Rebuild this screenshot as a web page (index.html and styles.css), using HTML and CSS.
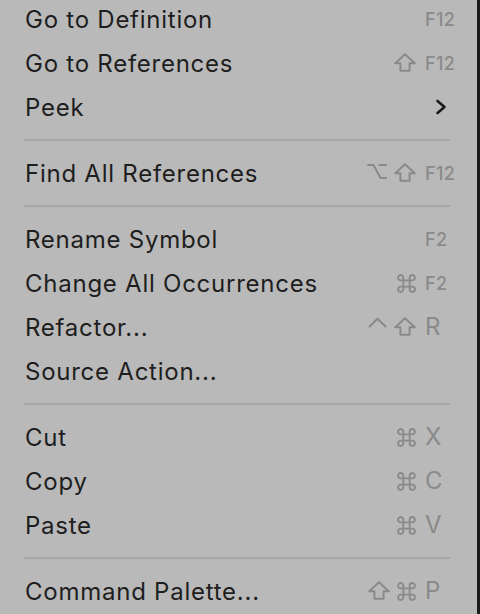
FILE: index.html
```html
<!DOCTYPE html>
<html lang="en">
<head>
<meta charset="utf-8">
<title>Context Menu</title>
<link rel="stylesheet" href="styles.css">
</head>
<body>
<div class="menu">
  <div class="item"><span class="label">Go to Definition</span><span class="keys"><span class="key fkey">F12</span></span></div>
  <div class="item"><span class="label">Go to References</span><span class="keys">
    <svg class="mod shift" viewBox="0 0 22 19"><path d="M11 1.2 L20.8 10.2 H15.6 V17.8 H6.4 V10.2 H1.2 Z"/></svg>
    <span class="key fkey">F12</span></span></div>
  <div class="item"><span class="label">Peek</span>
    <svg class="chev" viewBox="0 0 12 16"><path d="M2.5 2 L9.5 8 L2.5 14"/></svg></div>
  <div class="sep"></div>
  <div class="item"><span class="label">Find All References</span><span class="keys">
    <svg class="mod opt" viewBox="0 0 20 17"><path d="M1 2 H6.5 L13.5 15 H19.5 M12.5 2 H19.5"/></svg>
    <svg class="mod shift" viewBox="0 0 22 19"><path d="M11 1.2 L20.8 10.2 H15.6 V17.8 H6.4 V10.2 H1.2 Z"/></svg>
    <span class="key fkey">F12</span></span></div>
  <div class="sep"></div>
  <div class="item"><span class="label">Rename Symbol</span><span class="keys"><span class="key fkey">F2</span></span></div>
  <div class="item"><span class="label">Change All Occurrences</span><span class="keys">
    <svg class="mod cmd" viewBox="0.5 0.5 18 18"><path d="M6.5 6.5 V4 A2.5 2.5 0 1 0 4 6.5 H15 A2.5 2.5 0 1 0 12.5 4 V15 A2.5 2.5 0 1 0 15 12.5 H4 A2.5 2.5 0 1 0 6.5 15 Z"/></svg>
    <span class="key fkey">F2</span></span></div>
  <div class="item"><span class="label">Refactor...</span><span class="keys">
    <svg class="mod ctrl" viewBox="0 0 19 11"><path d="M1.5 9.5 L9.5 1.8 L17.5 9.5"/></svg>
    <svg class="mod shift" viewBox="0 0 22 19"><path d="M11 1.2 L20.8 10.2 H15.6 V17.8 H6.4 V10.2 H1.2 Z"/></svg>
    <span class="key">R</span></span></div>
  <div class="item"><span class="label">Source Action...</span></div>
  <div class="sep"></div>
  <div class="item"><span class="label">Cut</span><span class="keys">
    <svg class="mod cmd" viewBox="0.5 0.5 18 18"><path d="M6.5 6.5 V4 A2.5 2.5 0 1 0 4 6.5 H15 A2.5 2.5 0 1 0 12.5 4 V15 A2.5 2.5 0 1 0 15 12.5 H4 A2.5 2.5 0 1 0 6.5 15 Z"/></svg>
    <span class="key">X</span></span></div>
  <div class="item"><span class="label">Copy</span><span class="keys">
    <svg class="mod cmd" viewBox="0.5 0.5 18 18"><path d="M6.5 6.5 V4 A2.5 2.5 0 1 0 4 6.5 H15 A2.5 2.5 0 1 0 12.5 4 V15 A2.5 2.5 0 1 0 15 12.5 H4 A2.5 2.5 0 1 0 6.5 15 Z"/></svg>
    <span class="key">C</span></span></div>
  <div class="item"><span class="label">Paste</span><span class="keys">
    <svg class="mod cmd" viewBox="0.5 0.5 18 18"><path d="M6.5 6.5 V4 A2.5 2.5 0 1 0 4 6.5 H15 A2.5 2.5 0 1 0 12.5 4 V15 A2.5 2.5 0 1 0 15 12.5 H4 A2.5 2.5 0 1 0 6.5 15 Z"/></svg>
    <span class="key">V</span></span></div>
  <div class="sep"></div>
  <div class="item"><span class="label">Command Palette...</span><span class="keys">
    <svg class="mod shift" viewBox="0 0 22 19"><path d="M11 1.2 L20.8 10.2 H15.6 V17.8 H6.4 V10.2 H1.2 Z"/></svg>
    <svg class="mod cmd" viewBox="0.5 0.5 18 18"><path d="M6.5 6.5 V4 A2.5 2.5 0 1 0 4 6.5 H15 A2.5 2.5 0 1 0 12.5 4 V15 A2.5 2.5 0 1 0 15 12.5 H4 A2.5 2.5 0 1 0 6.5 15 Z"/></svg>
    <span class="key">P</span></span></div>
</div>
</body>
</html>
```
FILE: styles.css
```css
html, body {
  margin: 0;
  padding: 0;
  background: #1b1b1b;
  height: 614px;
  overflow: hidden;
}
.menu {
  width: 477px;
  height: 617px;
  margin-top: -3px;
  background: #b9b9b9;
  font-family: Inter, "Noto Sans", sans-serif;
  display: flex;
  flex-direction: column;
}
.item {
  height: 44px;
  display: flex;
  align-items: center;
  padding: 0 22px 0 25px;
}
.label {
  flex: 1;
  font-size: 24px;
  color: #1e1e1e;
  letter-spacing: 0.75px;
}
.keys {
  display: flex;
  align-items: center;
  gap: 7px;
}
.key {
  width: 30px;
  margin-left: 2px;
  font-size: 24px;
  line-height: 1;
  color: #8a8a8a;
}
.key.fkey {
  font-size: 18px;
  font-weight: 500;
  letter-spacing: 0.3px;
  padding-top: 2px;
}
.mod {
  fill: none;
  stroke: #8a8a8a;
  stroke-width: 2;
  stroke-linejoin: round;
  stroke-linecap: round;
}
.shift { width: 22px; height: 19px; margin-top: -1px; }
.opt { width: 20px; height: 17px; margin-top: -3px; }
.cmd { width: 19px; height: 19px; stroke-width: 1.8; }
.ctrl { width: 19px; height: 11px; margin-top: -9px; }
.chev {
  width: 12px;
  height: 16px;
  margin-right: 8px;
  fill: none;
  stroke: #1a1a1a;
  stroke-width: 2.6;
  stroke-linecap: round;
  stroke-linejoin: round;
}
.sep {
  height: 22px;
  display: flex;
  align-items: center;
  padding: 0 27px 0 24px;
}
.sep::before {
  content: "";
  flex: 1;
  height: 2px;
  background: #a7a7a7;
}
```
